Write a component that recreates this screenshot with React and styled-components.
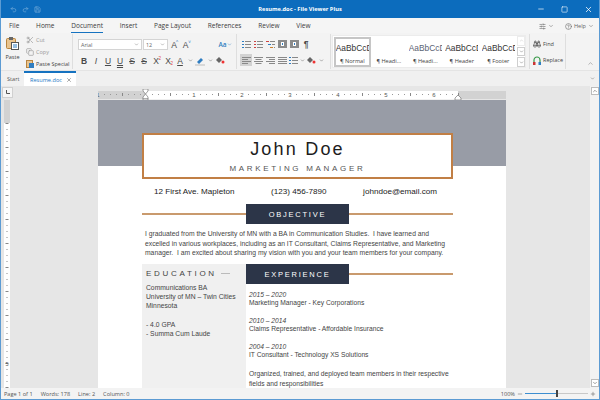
import React from "react";
import styled, { createGlobalStyle } from "styled-components";
import {
  Undo2,
  Redo2,
  Save,
  Minus,
  Square,
  X,
  Scissors,
  Copy,
  ChevronDown,
  ChevronUp,
  CircleHelp,
  SlidersHorizontal,
  Binoculars,
  Plus,
} from "lucide-react";

const GlobalStyle = createGlobalStyle`
  html, body {
    margin: 0;
    padding: 0;
    width: 600px;
    height: 400px;
    overflow: hidden;
    background: #fff;
  }
  * { box-sizing: border-box; }
`;

const UI_FONT = `"Open Sans", "Noto Sans", sans-serif`;
const DOC_FONT = `"Liberation Sans", Arial, sans-serif`;

const Window = styled.div`
  width: 600px;
  height: 400px;
  display: flex;
  flex-direction: column;
  border: 1px solid #5c9bd3;
  border-top: 0;
  overflow: hidden;
  font-family: ${UI_FONT};
  color: #444;
  background: #f3f3f3;
`;

const TitleBar = styled.div`
  height: 18px;
  flex: none;
  margin: 0 -1px;
  background: #0c6cbd;
  display: grid;
  grid-template-columns: 1fr auto 1fr;
  align-items: center;
  color: #fff;
`;

const QuickTools = styled.div`
  display: flex;
  align-items: center;
  gap: 5px;
  padding-left: 10px;
  color: #7fb2dd;
`;

const Title = styled.div`
  font-size: 5.7px;
  font-weight: 700;
`;

const WinButtons = styled.div`
  display: flex;
  justify-content: flex-end;
  align-items: center;
  gap: 16px;
  padding-right: 7px;
`;

const MenuBar = styled.div`
  height: 15px;
  flex: none;
  display: flex;
  align-items: center;
  padding: 1px 5px 0 8px;
  background: #f5f5f5;
`;

const MenuTab = styled.div`
  font-size: 6.5px;
  line-height: 13px;
  margin-right: 16.8px;
  color: #3c3c3c;
  border-bottom: 1px solid ${(p) => (p.$active ? "#1572c0" : "transparent")};
  box-shadow: ${(p) => (p.$active ? "0 1px 0 #1572c0" : "none")};
`;

const MenuRight = styled.div`
  margin-left: auto;
  display: flex;
  align-items: center;
  gap: 11px;
  font-size: 5.6px;
  color: #666;
`;

const MenuItem = styled.span`
  display: inline-flex;
  align-items: center;
  gap: 2px;
`;

const Ribbon = styled.div`
  height: 38px;
  flex: none;
  display: flex;
  background: #f3f3f3;
  border-bottom: 1px solid #e4e4e4;
`;

const Group = styled.div`
  width: ${(p) => p.$w}px;
  flex: none;
  border-right: 1px solid #dedede;
  margin: 1px 0;
`;

const ClipGroup = styled(Group)`
  display: flex;
  padding-left: 4px;
  gap: 6px;
`;

const PasteButton = styled.div`
  display: flex;
  flex-direction: column;
  align-items: center;
  font-size: 5.5px;
  gap: 3px;
  padding-top: 2px;
  width: 15px;
`;

const ClipList = styled.div`
  display: flex;
  flex-direction: column;
  gap: 3px;
  padding-top: 1px;
`;

const ClipRow = styled.div`
  height: 9px;
  display: flex;
  align-items: center;
  gap: 2px;
  font-size: 5.5px;
  white-space: nowrap;
  color: ${(p) => (p.$dim ? "#999" : "#444")};
`;

const FontGroup = styled(Group)`
  padding: 5px 0 0 5px;
  display: flex;
  flex-direction: column;
  gap: 5px;
`;

const ToolRow = styled.div`
  display: flex;
  align-items: center;
  height: ${(p) => p.$h || 11}px;
`;

const Combo = styled.div`
  width: ${(p) => p.$w}px;
  height: 11px;
  margin-right: 1px;
  background: #fff;
  border: 1px solid #d4d4d4;
  font-size: 5.4px;
  padding: 0 2px;
  display: flex;
  align-items: center;
  justify-content: space-between;
  color: #666;
`;

const Spacer = styled.div`
  width: ${(p) => p.$w}px;
  flex: none;
`;

const Tool = styled.div`
  width: ${(p) => p.$w || 12}px;
  height: 12px;
  flex: none;
  display: flex;
  align-items: center;
  justify-content: center;
  position: relative;
  font-family: ${DOC_FONT};
  font-size: 8.5px;
  color: #4a4a4a;
  font-weight: ${(p) => (p.$bold ? 700 : 400)};
  font-style: ${(p) => (p.$italic ? "italic" : "normal")};
  text-decoration: ${(p) => p.$deco || "none"};
  background: ${(p) => (p.$on ? "#d2d2d2" : "transparent")};
`;

const AaTool = styled(Tool)`
  font-family: ${UI_FONT};
  font-size: 6.5px;
  font-weight: 600;
  color: #2f7dc1;
`;

const ParaGroup = styled(Group)`
  padding: 4px 0 0 3px;
  display: flex;
  flex-direction: column;
  gap: 4px;
`;

const Gallery = styled.div`
  width: 194px;
  margin: 2px 3px 2px 1px;
  flex: none;
  background: #fff;
  display: flex;
  padding: 1px 0 0 1px;
  border: 1px solid #ececec;
`;

const StyleCard = styled.div`
  width: 36.5px;
  height: 30px;
  flex: none;
  display: flex;
  flex-direction: column;
  align-items: center;
  overflow: hidden;
  border: 1px solid ${(p) => (p.$active ? "#c6c6c6" : "transparent")};
  outline: ${(p) => (p.$active ? "1px solid #c6c6c6" : "none")};
  outline-offset: -2px;
`;

const StylePreview = styled.div`
  height: 19px;
  padding-top: 2px;
  font-family: ${DOC_FONT};
  font-size: 8.4px;
  line-height: 17px;
  white-space: nowrap;
  overflow: hidden;
  width: 33px;
  color: ${(p) => p.$color || "#333"};
`;

const StyleName = styled.div`
  font-size: 5.6px;
  line-height: 9px;
  white-space: nowrap;
  color: #444;
`;

const GalleryScroll = styled.div`
  margin-left: auto;
  width: 8px;
  display: flex;
  flex-direction: column;
  gap: 1px;
  margin-top: -1px;
`;

const ScrollCell = styled.div`
  height: 10px;
  background: #fff;
  border: 1px solid ${(p) => (p.$dim ? "#ececec" : "#cfcfcf")};
  display: flex;
  align-items: center;
  justify-content: center;
  color: ${(p) => (p.$dim ? "#bbb" : "#555")};
`;

const FindGroup = styled(Group)`
  padding: 5px 0 0 3px;
  display: flex;
  flex-direction: column;
  gap: 6px;
  border-left: 1px solid #dedede;
`;

const FindRow = styled.div`
  display: flex;
  align-items: center;
  gap: 2px;
  font-size: 5.5px;
  height: 10px;
`;

const Collapse = styled.div`
  flex: 1;
  display: flex;
  align-items: flex-end;
  justify-content: flex-end;
  padding: 0 5px 3px 0;
  color: #888;
`;

const DocTabs = styled.div`
  height: 15px;
  flex: none;
  display: flex;
  align-items: stretch;
  background: #f0f0f0;
  padding-right: 4px;
`;

const DocTab = styled.div`
  display: flex;
  align-items: center;
  justify-content: space-between;
  font-size: 5.6px;
  width: ${(p) => p.$w}px;
  padding: 0 ${(p) => (p.$active ? 4 : 0)}px 0 6px;
  color: ${(p) => (p.$active ? "#1d78c4" : "#555")};
  background: ${(p) => (p.$active ? "#fff" : "transparent")};
  border-top: ${(p) => (p.$active ? "2px solid #1572c0" : "none")};
`;

const TabEnd = styled.div`
  margin-left: auto;
  display: flex;
  align-items: center;
  color: #555;
`;

const Workspace = styled.div`
  flex: 1;
  min-height: 0;
  display: grid;
  grid-template-columns: 97px 1fr 9px;
  grid-template-rows: 14px 1fr;
  background: #e6e6e6;
`;

const RulerCorner = styled.div`
  padding: 1px 0 0 1px;
`;

const CornerBox = styled.div`
  width: 11px;
  height: 11px;
  background: #f6f6f6;
  border: 1px solid #d0d0d0;
  display: flex;
  align-items: center;
  justify-content: center;
`;

const HRuler = styled.div`
  min-width: 0;
  overflow: visible;
`;

const ScrollTrack = styled.div`
  grid-row: 1 / 3;
  grid-column: 3;
  display: flex;
  flex-direction: column;
  justify-content: space-between;
  align-items: center;
  padding: 1px 0;
  background: #f2f2f2;
`;

const ScrollBtn = styled.div`
  width: 8px;
  height: 8px;
  background: #fff;
  border: 1px solid #bcbcbc;
  display: flex;
  align-items: center;
  justify-content: center;
  color: #444;
`;

const LeftPane = styled.div`
  padding-left: 3px;
  overflow: hidden;
`;

const PageScroller = styled.div`
  min-height: 0;
  overflow: hidden;
`;

const Page = styled.div`
  width: 408px;
  height: 288px;
  background: #fff;
  color: #333;
  font-family: ${DOC_FONT};
  display: flex;
  flex-direction: column;
  overflow: hidden;
`;

const Band = styled.div`
  height: 66px;
  flex: none;
  background: #989ca6;
  padding: 33px 53px 0 44px;
`;

const NameBox = styled.div`
  height: 46px;
  background: #fff;
  border: 2px solid #c17f45;
  display: flex;
  flex-direction: column;
  align-items: center;
`;

const Name = styled.div`
  font-size: 18px;
  letter-spacing: 2.2px;
  line-height: 22px;
  margin-top: 3px;
  color: #1d1d1d;
`;

const Role = styled.div`
  font-size: 8px;
  letter-spacing: 2.7px;
  line-height: 13px;
  margin-top: 2px;
  color: #555;
`;

const Contact = styled.div`
  margin: 13px 69px 0 56px;
  height: 25px;
  display: flex;
  justify-content: space-between;
  align-items: center;
  font-size: 8.1px;
  color: #222;
`;

const SectionRow = styled.div`
  height: 20px;
  display: flex;
  align-items: center;
  margin: 0 53px 0 44px;
`;

const Rule = styled.div`
  flex: 1;
  height: 2px;
  background: #c99a6d;
`;

const SectionTitle = styled.div`
  width: 103px;
  height: 20px;
  flex: none;
  background: #2c3548;
  color: #fff;
  font-size: 7.5px;
  letter-spacing: 1.75px;
  display: flex;
  align-items: center;
  justify-content: center;
`;

const Summary = styled.p`
  margin: 5px 50px 0 47px;
  height: 35px;
  font-size: 6.75px;
  line-height: 9.6px;
  white-space: pre;
  color: #444;
`;

const Columns = styled.div`
  flex: 1;
  min-height: 0;
  display: grid;
  grid-template-columns: 104px 1fr;
  margin: 0 53px 0 44px;
`;

const Sidebar = styled.div`
  background: #f0f0f0;
  padding: 3px 4px;
  font-size: 6.75px;
  line-height: 9.3px;
  color: #444;
`;

const SideTitle = styled.div`
  display: flex;
  align-items: center;
  gap: 4px;
  font-size: 8px;
  letter-spacing: 2.7px;
  line-height: 13px;
  margin-bottom: 2.5px;
  color: #444;

  &::after {
    content: "";
    width: 9px;
    height: 1px;
    background: #bbb;
  }
`;

const SideGap = styled.div`
  height: 9.3px;
`;

const Main = styled.div`
  min-width: 0;
  display: flex;
  flex-direction: column;
`;

const ExpRow = styled.div`
  height: 20px;
  display: flex;
  align-items: center;
  flex: none;
`;

const ExpList = styled.div`
  padding: 6.5px 0 0 3px;
  font-size: 6.7px;
  line-height: 8.7px;
  color: #444;
`;

const Job = styled.div`
  margin-bottom: 8.7px;
`;

const Dates = styled.div`
  font-style: italic;
`;

const Duties = styled.div`
  line-height: 9.8px;
  white-space: pre;
`;

const StatusBar = styled.div`
  height: 11px;
  flex: none;
  display: flex;
  align-items: center;
  padding: 0 3px 0 3px;
  gap: 8px;
  font-size: 5.6px;
  color: #555;
  background: #f3f3f3;
`;

const StatusRight = styled.div`
  margin-left: auto;
  display: flex;
  align-items: center;
  gap: 2px;
`;

const ZoomTrack = styled.div`
  width: 63px;
  height: 1px;
  background: #c8c8c8;
  position: relative;
`;

const ZoomFill = styled.div`
  width: 32px;
  height: 1px;
  background: #3d8ed0;
`;

const ZoomThumb = styled.div`
  position: absolute;
  left: 31px;
  top: -3px;
  width: 2px;
  height: 7px;
  background: #444;
`;

const Sup = styled.span`
  position: absolute;
  right: 1px;
  top: 1px;
  font-size: 4.5px;
  color: ${(p) => p.$color || "#d44"};
`;

const Sub = styled(Sup)`
  top: auto;
  bottom: 1px;
`;

const HorizontalRuler = () => {
  const ticks = [];
  const labels = [];
  // one inch = 48px, origin at the left indent
  for (let i = -48; i <= 312; i += 6) {
    const x = i + 48;
    if (i % 48 === 0) {
      const n = Math.abs(i / 48);
      if (n > 0) labels.push(<text key={i} x={x} y={8} fontSize="6" textAnchor="middle" fill="#555" fontFamily="Liberation Sans">{n}</text>);
    } else if (i % 24 === 0) {
      ticks.push(<rect key={i} x={x} y={4} width="1" height="3" fill="#888" />);
    } else {
      ticks.push(<rect key={i} x={x} y={5} width="1" height="1" fill="#999" />);
    }
    if (i >= 0 && i % 24 === 0) ticks.push(<rect key={`b${i}`} x={x} y={11} width="1" height="2" fill="#bbb" />);
  }
  return (
    <svg width="430" height="14" viewBox="0 0 430 14">
      <rect x="0" y="2" width="408" height="8" fill="#fff" />
      <rect x="0" y="2" width="47" height="8" fill="#d2d2d2" />
      <rect x="360" y="2" width="48" height="8" fill="#d2d2d2" />
      <rect x="48" y="10" width="312" height="3" fill="#efefef" />
      {ticks}
      {labels}
      <path d="M45 0h5v2l-2.5 3-2.5-3zM47.5 5l2.5 3v2h-5v-2z" fill="#fff" stroke="#777" strokeWidth=".7" />
      <rect x="45" y="10" width="5" height="3" fill="#fff" stroke="#777" strokeWidth=".7" />
      <path d="M360 6l3 3v2h-6v-2z" fill="#fff" stroke="#777" strokeWidth=".7" />
    </svg>
  );
};

const VerticalRuler = () => {
  const marks = [];
  for (let i = 0; i <= 270; i += 6) {
    const y = i + 23;
    marks.push(<rect key={i} x={i % 24 === 0 ? 1.5 : 2.5} y={y} width={i % 24 === 0 ? 3 : 1} height="1" fill="#888" />);
  }
  return (
    <svg width="7" height="290" viewBox="0 0 7 290">
      <rect x="0" y="0" width="6" height="290" fill="#fff" />
      <rect x="0" y="0" width="6" height="23" fill="#d2d2d2" />
      {marks}
      <text x="3" y="266" fontSize="5.5" fill="#555" textAnchor="middle" fontFamily="Liberation Sans">5</text>
    </svg>
  );
};

const CornerGlyph = () => (
  <svg width="5" height="5" viewBox="0 0 5 5" fill="none">
    <path d="M1.5 0v3.5H5" stroke="#555" />
  </svg>
);

const PasteIcon = () => (
  <svg width="13" height="14" viewBox="0 0 13 14">
    <rect x=".5" y="2.5" width="9" height="10" rx="1" fill="#e9c48f" stroke="#b8843f" />
    <rect x="3" y="1" width="4" height="3" fill="#666" />
    <rect x="5.5" y="6.5" width="7" height="7" fill="#fff" stroke="#555" />
    <path d="M7 9h4M7 11h4" stroke="#2f7dc1" />
  </svg>
);

const PasteSpecialIcon = () => (
  <svg width="8" height="9" viewBox="0 0 8 9">
    <rect x=".5" y="1.5" width="6" height="7" fill="#e9c48f" stroke="#b8843f" />
    <rect x="3" y="4" width="5" height="5" fill="#2f7dc1" />
  </svg>
);

const Lines = ({ rows }) => (
  <svg width="9" height="9" viewBox="0 0 9 9">
    {rows.map(([x, y, w, c], i) => (
      <rect key={i} x={x} y={y} width={w} height="1" fill={c || "#888"} />
    ))}
  </svg>
);

const ListIcon = ({ color }) => (
  <Lines rows={[[0, 1, 2, color], [3, 1, 6], [0, 4, 2, color], [3, 4, 6], [0, 7, 2, color], [3, 7, 6]]} />
);

const MultiIcon = () => (
  <Lines rows={[[0, 1, 3, "#c44"], [4, 1, 5], [2, 4, 3, "#2f7dc1"], [6, 4, 3], [4, 7, 3, "#c9812f"], [8, 7, 1]]} />
);

const BoxIcon = () => (
  <svg width="9" height="8" viewBox="0 0 9 8">
    <rect x="0" y="0" width="9" height="8" fill="#8a8a8a" />
    <rect x="3" y="2" width="3" height="4" fill="#fff" />
    <rect x="4" y="3" width="1" height="2" fill="#2f7dc1" />
  </svg>
);

const Align = ({ kind }) => {
  const s = { left: [[0, 9], [0, 6], [0, 9], [0, 6]], center: [[0, 9], [1.5, 6], [0, 9], [1.5, 6]], right: [[0, 9], [3, 6], [0, 9], [3, 6]], justify: [[0, 9], [0, 9], [0, 9], [0, 9]] }[kind];
  return <Lines rows={s.map(([x, w], i) => [x, 1 + i * 2, w])} />;
};

const Highlighter = () => (
  <svg width="10" height="10" viewBox="0 0 10 10">
    <path d="M2 6l4-4 2 2-4 4z" fill="#2f7dc1" />
    <rect x="0" y="8" width="10" height="2" fill="#d8d8d8" />
  </svg>
);

const Eraser = () => (
  <svg width="10" height="9" viewBox="0 0 10 9">
    <path d="M1 4l3-3 3 3-3 3z" fill="#666" />
    <circle cx="8" cy="6" r="1.5" fill="#e33" />
  </svg>
);

const ReplaceIcon = () => (
  <svg width="8" height="9" viewBox="0 0 8 9" fill="none">
    <path d="M1 7V4a3 3 0 0 1 6 0v3" stroke="#3a9a4a" strokeWidth="1.2" />
    <rect x="0" y="6" width="2.5" height="3" fill="#c33" />
    <rect x="5.5" y="6" width="2.5" height="3" fill="#2f7dc1" />
  </svg>
);

const SUMMARY = `I graduated from the University of MN with a BA in Communication Studies.  I have learned and
excelled in various workplaces, including as an IT Consultant, Claims Representative, and Marketing
manager.  I am excited about sharing my vision with you and your team members for your company.`;

export default function App() {
  const menu = ["File", "Home", "Document", "Insert", "Page Layout", "References", "Review", "View"];
  return (
    <Window>
      <GlobalStyle />
      <TitleBar>
        <QuickTools>
          <Undo2 size={7} />
          <Redo2 size={7} />
          <Save size={7} />
        </QuickTools>
        <Title>Resume.doc - File Viewer Plus</Title>
        <WinButtons>
          <Minus size={8} />
          <Square size={7} />
          <X size={9} />
        </WinButtons>
      </TitleBar>
      <MenuBar>
        {menu.map((m) => (
          <MenuTab key={m} $active={m === "Document"}>{m}</MenuTab>
        ))}
        <MenuRight>
          <MenuItem>
            <SlidersHorizontal size={7} />
            <ChevronDown size={6} />
          </MenuItem>
          <MenuItem>
            <CircleHelp size={7} />
            Help
            <ChevronDown size={6} />
          </MenuItem>
        </MenuRight>
      </MenuBar>
      <Ribbon>
        <ClipGroup $w={72}>
          <PasteButton>
            <PasteIcon />
            Paste
          </PasteButton>
          <ClipList>
            <ClipRow $dim><Scissors size={8} />Cut</ClipRow>
            <ClipRow $dim><Copy size={8} />Copy</ClipRow>
            <ClipRow><PasteSpecialIcon />Paste Special</ClipRow>
          </ClipList>
        </ClipGroup>
        <FontGroup $w={164}>
          <ToolRow>
            <Combo $w={64}>Arial<ChevronDown size={5} /></Combo>
            <Combo $w={25}>12<ChevronDown size={5} /></Combo>
            <Tool $w={10}>A<Sup $color="#2f7dc1">^</Sup></Tool>
            <Tool $w={13}>A<Sup $color="#2f7dc1">˅</Sup></Tool>
            <Spacer $w={23} />
            <AaTool $w={20}>Aa<ChevronDown size={5} /></AaTool>
          </ToolRow>
          <ToolRow>
            <Tool $bold>B</Tool>
            <Tool $italic>I</Tool>
            <Tool $deco="underline">U</Tool>
            <Tool $deco="underline double">U</Tool>
            <Tool $deco="line-through">S</Tool>
            <Tool $deco="line-through">S</Tool>
            <Tool>X<Sup>2</Sup></Tool>
            <Tool>X<Sub>2</Sub></Tool>
            <Tool $deco="underline">A</Tool>
            <Tool $w={8}><ChevronDown size={5} /></Tool>
            <Tool><Highlighter /></Tool>
            <Tool $w={8}><ChevronDown size={5} /></Tool>
            <Tool><Eraser /></Tool>
          </ToolRow>
        </FontGroup>
        <ParaGroup $w={94}>
          <ToolRow $h={12}>
            <Tool><ListIcon color="#2f7dc1" /></Tool>
            <Tool><ListIcon color="#c44" /></Tool>
            <Tool><MultiIcon /></Tool>
            <Tool><BoxIcon /></Tool>
            <Tool><BoxIcon /></Tool>
            <Tool $bold>¶</Tool>
          </ToolRow>
          <ToolRow $h={12}>
            <Tool $on><Align kind="left" /></Tool>
            <Tool><Align kind="center" /></Tool>
            <Tool><Align kind="right" /></Tool>
            <Tool><Align kind="justify" /></Tool>
            <Tool $w={11}><ListIcon color="#2f7dc1" /></Tool>
            <Tool $w={6}><ChevronDown size={5} /></Tool>
            <Tool><Eraser /></Tool>
            <Tool $w={8}><ChevronDown size={5} /></Tool>
          </ToolRow>
        </ParaGroup>
        <Gallery>
          <StyleCard $active>
            <StylePreview>AaBbCcD</StylePreview>
            <StyleName>¶ Normal</StyleName>
          </StyleCard>
          <StyleCard>
            <StylePreview />
            <StyleName>¶ Headi...</StyleName>
          </StyleCard>
          <StyleCard>
            <StylePreview $color="#5a6272">AaBbCcD</StylePreview>
            <StyleName>¶ Headi...</StyleName>
          </StyleCard>
          <StyleCard>
            <StylePreview>AaBbCcD</StylePreview>
            <StyleName>¶ Header</StyleName>
          </StyleCard>
          <StyleCard>
            <StylePreview>AaBbCcD</StylePreview>
            <StyleName>¶ Footer</StyleName>
          </StyleCard>
          <GalleryScroll>
            <ScrollCell $dim><ChevronUp size={5} /></ScrollCell>
            <ScrollCell><ChevronDown size={5} /></ScrollCell>
            <ScrollCell><ChevronDown size={5} /></ScrollCell>
          </GalleryScroll>
        </Gallery>
        <FindGroup $w={37}>
          <FindRow><Binoculars size={8} />Find</FindRow>
          <FindRow><ReplaceIcon />Replace</FindRow>
        </FindGroup>
        <Collapse><ChevronUp size={7} /></Collapse>
      </Ribbon>
      <DocTabs>
        <DocTab $w={23}>Start</DocTab>
        <DocTab $w={52} $active>Resume.doc<X size={6} color="#555" /></DocTab>
        <TabEnd><ChevronDown size={5} /></TabEnd>
      </DocTabs>
      <Workspace>
        <RulerCorner><CornerBox><CornerGlyph /></CornerBox></RulerCorner>
        <HRuler><HorizontalRuler /></HRuler>
        <ScrollTrack>
          <ScrollBtn><ChevronUp size={6} /></ScrollBtn>
          <ScrollBtn><ChevronDown size={6} /></ScrollBtn>
        </ScrollTrack>
        <LeftPane><VerticalRuler /></LeftPane>
        <PageScroller>
          <Page>
            <Band>
              <NameBox>
                <Name>John Doe</Name>
                <Role>MARKETING MANAGER</Role>
              </NameBox>
            </Band>
            <Contact>
              <span>12 First Ave. Mapleton</span>
              <span>(123) 456-7890</span>
              <span>johndoe@email.com</span>
            </Contact>
            <SectionRow>
              <Rule />
              <SectionTitle>OBJECTIVE</SectionTitle>
              <Rule />
            </SectionRow>
            <Summary>{SUMMARY}</Summary>
            <Columns>
              <Sidebar>
                <SideTitle>EDUCATION</SideTitle>
                Communications BA<br />
                University of MN – Twin Cities<br />
                Minnesota
                <SideGap />
                - 4.0 GPA<br />
                - Summa Cum Laude
              </Sidebar>
              <Main>
                <ExpRow>
                  <SectionTitle>EXPERIENCE</SectionTitle>
                  <Rule />
                </ExpRow>
                <ExpList>
                  <Job>
                    <Dates>2015 – 2020</Dates>
                    Marketing Manager - Key Corporations
                  </Job>
                  <Job>
                    <Dates>2010 – 2014</Dates>
                    Claims Representative - Affordable Insurance
                  </Job>
                  <Job>
                    <Dates>2004 – 2010</Dates>
                    IT Consultant - Technology XS Solutions
                  </Job>
                  <Duties>{"Organized, trained, and deployed team members in their respective\nfields and responsibilities"}</Duties>
                </ExpList>
              </Main>
            </Columns>
          </Page>
        </PageScroller>
      </Workspace>
      <StatusBar>
        <span>Page 1 of 1</span>
        <span>Words: 178</span>
        <span>Line: 2</span>
        <span>Column: 0</span>
        <StatusRight>
          100%
          <Minus size={6} />
          <ZoomTrack>
            <ZoomFill />
            <ZoomThumb />
          </ZoomTrack>
          <Plus size={6} />
        </StatusRight>
      </StatusBar>
    </Window>
  );
}
